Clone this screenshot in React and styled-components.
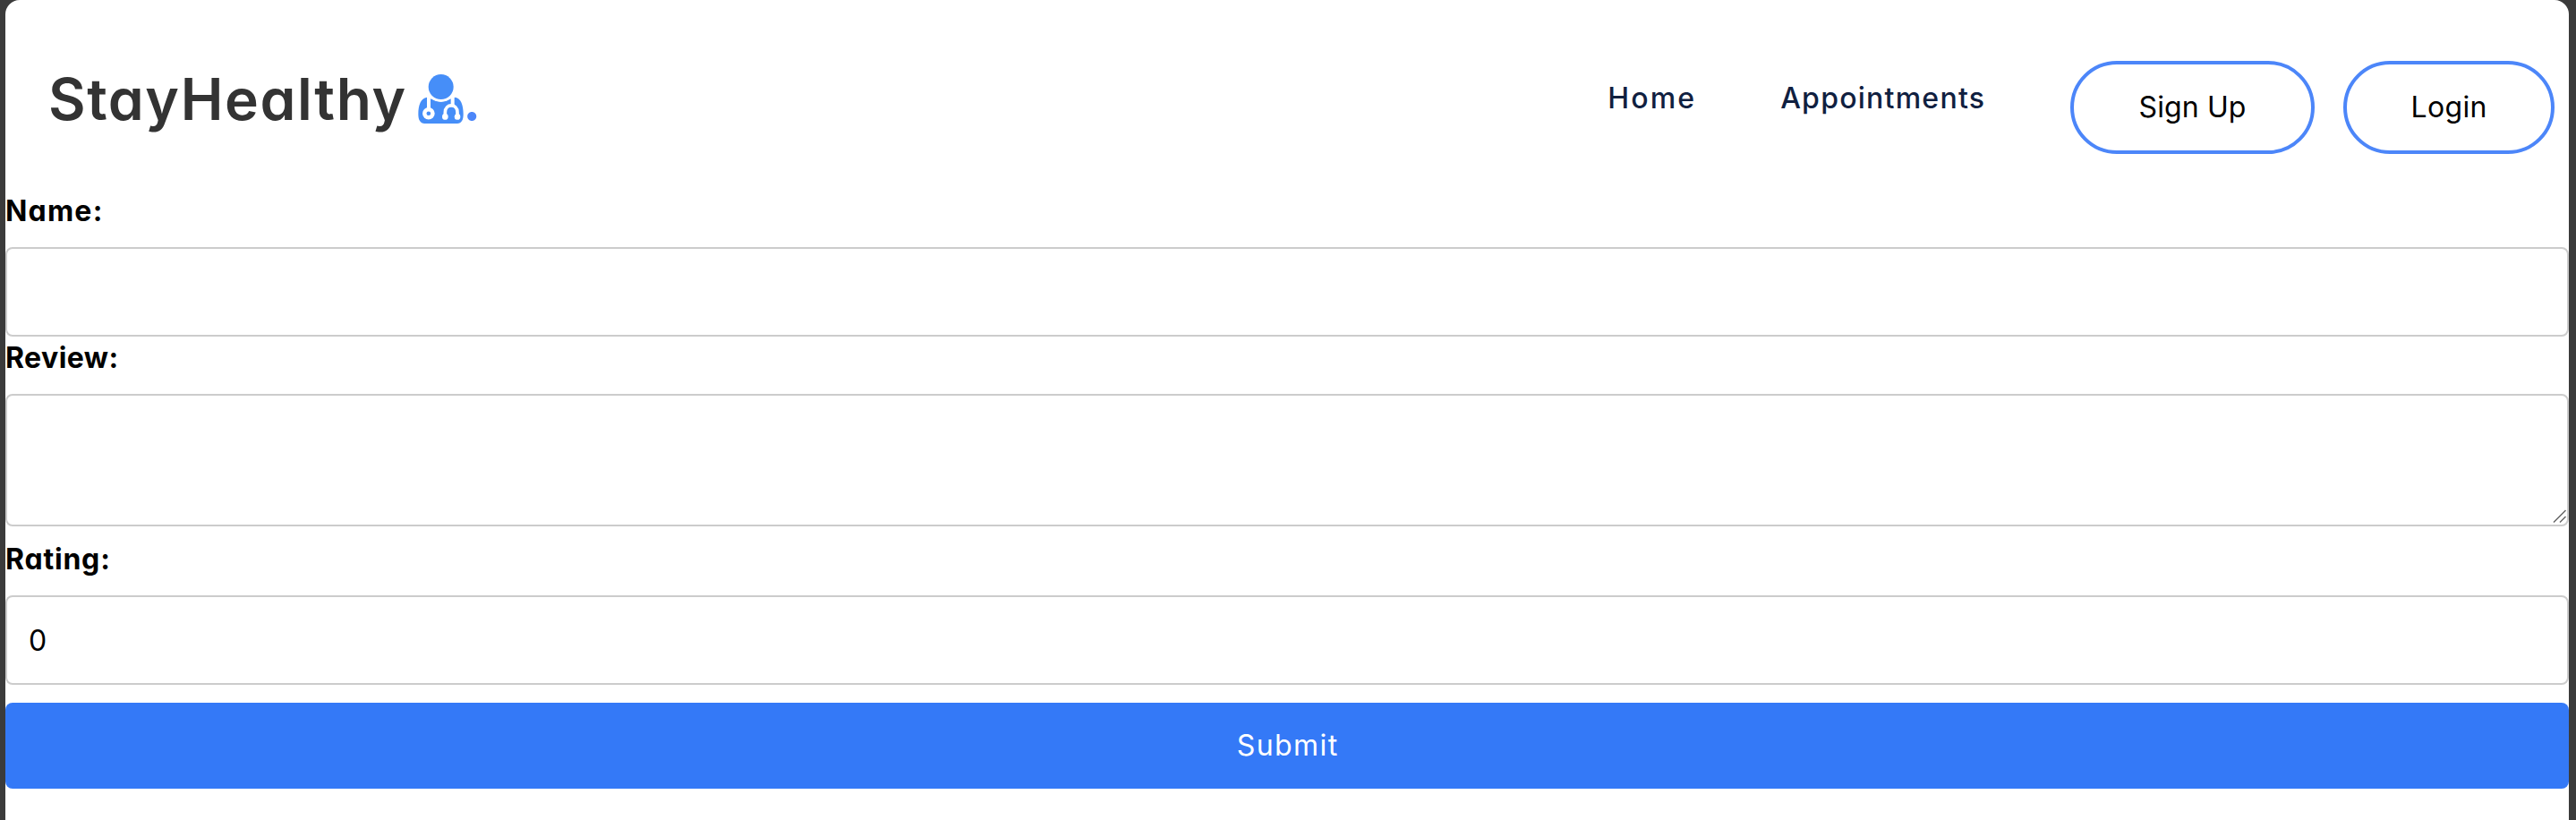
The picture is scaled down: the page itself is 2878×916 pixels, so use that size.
import React from 'react';
import styled, { createGlobalStyle } from 'styled-components';

const GlobalStyle = createGlobalStyle`
  *, *::before, *::after { box-sizing: border-box; }
  html, body { margin: 0; background: #3b3b3b; }
  body, input, textarea, button {
    font-family: Inter, "Open Sans", sans-serif;
    font-feature-settings: "cv11" 1;
  }
  body { height: 916px; overflow: hidden; }
`;

const Page = styled.div`
  height: 916px;
  padding: 0 8px 0 6px;
  background: #3b3b3b;
`;

const Panel = styled.main`
  height: 100%;
  background: #fff;
  border-radius: 16px 16px 0 0;
`;

const Header = styled.header`
  height: 212px;
  padding: 0 16px 0 48px;
  display: flex;
  justify-content: space-between;
  align-items: flex-start;
`;

const Brand = styled.div`
  display: flex;
  align-items: flex-start;
  padding-top: 63px;
  font-size: 64px;
  line-height: 96px;
  font-weight: 600;
  color: #333;
`;

const BrandName = styled.span`
  width: 413px;
  letter-spacing: 1.6px;
  white-space: nowrap;
`;

const DoctorIcon = styled.svg`
  width: 51px;
  height: 55.5px;
  margin-top: 19.5px;
`;

const BrandDot = styled.span`
  color: #4c86f9;
  margin-left: -1px;
`;

const Nav = styled.nav`
  display: flex;
  align-items: flex-start;
  padding-top: 68px;
`;

/* The trailing letter space is taken back so that it does not shift the text's neighbours. */
const Text = styled.span`
  letter-spacing: ${(p) => p.$track}px;
  margin-right: ${(p) => -p.$track}px;
`;

const NavLink = styled.a`
  margin-right: 96px;
  font-size: 32px;
  line-height: 84px;
  font-weight: 500;
  color: #102040;
`;

const PillButton = styled.button`
  width: ${(p) => p.$width}px;
  height: 104px;
  padding: 0 0 1px;
  border: 4px solid #4c86f9;
  border-radius: 52px;
  background: transparent;
  color: #000;
  font-size: 32px;
  & + & { margin-left: 32px; }
`;

const Form = styled.form`
  display: flex;
  flex-direction: column;
`;

const Label = styled.label`
  height: 48px;
  margin: ${(p) => p.$top || 0}px 0 16px;
  font-size: 32px;
  line-height: 48px;
  font-weight: 700;
  color: #000;
`;

const Input = styled.input`
  height: 100px;
  padding: 0 24px;
  border: 2px solid #ccc;
  border-radius: 8px;
  font-size: 32px;
  color: #000;
  outline: none;
`;

const AreaWrap = styled.div`
  position: relative;
  height: 148px;
`;

const Area = styled.textarea`
  display: block;
  width: 100%;
  height: 100%;
  padding: 20px 24px;
  border: 2px solid #ccc;
  border-radius: 8px;
  resize: none;
  outline: none;
  font-size: 32px;
`;

const Grip = styled.svg`
  position: absolute;
  right: 2px;
  bottom: 3px;
  width: 17px;
  height: 16px;
`;

const Submit = styled.button`
  height: 96px;
  margin-top: 20px;
  padding: 0 0 2px;
  border: 0;
  border-radius: 8px;
  background: #3479f7;
  color: #fff;
  font-size: 32px;
`;

export default function App() {
  return (
    <Page>
      <GlobalStyle />
      <Panel>
        <Header>
          <Brand>
            <BrandName>StayHealthy</BrandName>
            <DoctorIcon viewBox="81 67 153 166">
              <path fill="#468ef8" d="M111 144 C90 147 82 170 82 200 C82 222 90 232 108 232 H208 C226 232 233 222 233 200 C233 170 225 147 206 144 L190 149 Q158 169 125 149 Z" />
              <g fill="none" stroke="#fff">
                <circle cx="158" cy="109" r="46" strokeWidth="8" />
                <path d="M117 140 V182 M197 140 V170" strokeWidth="12" />
                <path d="M172 209 V194 C172 164 213 164 213 194 V209" strokeWidth="11" />
              </g>
              <circle cx="116.5" cy="198" r="20.5" fill="#fff" />
              <circle cx="116.5" cy="198" r="7" fill="#468ef8" />
              <circle cx="172" cy="209" r="10" fill="#fff" />
              <circle cx="213" cy="209" r="10" fill="#fff" />
              <circle cx="158" cy="109" r="42" fill="#468ef8" />
            </DoctorIcon>
            <BrandDot>.</BrandDot>
          </Brand>
          <Nav>
            <NavLink><Text $track={2.2}>Home</Text></NavLink>
            <NavLink><Text $track={1.25}>Appointments</Text></NavLink>
            <PillButton $width={273}><Text $track={0.1}>Sign Up</Text></PillButton>
            <PillButton $width={236}><Text $track={0.3}>Login</Text></PillButton>
          </Nav>
        </Header>
        <Form onSubmit={(e) => e.preventDefault()}>
          <Label><Text $track={1.2}>Name:</Text></Label>
          <Input />
          <Label><Text $track={0.45}>Review:</Text></Label>
          <AreaWrap>
            <Area />
            <Grip viewBox="0 0 17 16" fill="none" stroke="#666" strokeWidth="1.5">
              <path d="M2 14.5 L15.5 1 M9 14.5 L15.5 8" />
            </Grip>
          </AreaWrap>
          <Label $top={13}><Text $track={0.8}>Rating:</Text></Label>
          <Input defaultValue="0" />
          <Submit><Text $track={1.4}>Submit</Text></Submit>
        </Form>
      </Panel>
    </Page>
  );
}
